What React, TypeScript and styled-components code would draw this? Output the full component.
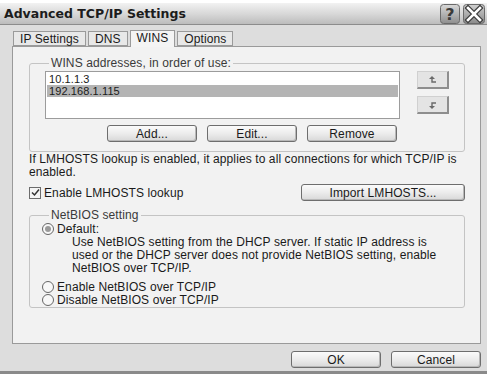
import styled, { createGlobalStyle } from "styled-components";

const Global = createGlobalStyle`
    html, body { margin: 0; padding: 0; background: #ffffff; }
    * { box-sizing: border-box; }
`

const FONT = `"Liberation Sans", Arial, sans-serif`

function HelpIcon() {
    return (
        <svg width="20" height="20" viewBox="0 0 20 20">
            <defs>
                <linearGradient id="hb" x1="0" y1="0" x2="0" y2="1">
                    <stop offset="0" stopColor="#d8d8d8" />
                    <stop offset="1" stopColor="#8e8e8e" />
                </linearGradient>
            </defs>
            <rect x="0.5" y="0.5" width="19" height="19" rx="3" fill="url(#hb)" stroke="#6a6a6a" />
            <text x="10" y="16" textAnchor="middle" fontFamily="DejaVu Sans, sans-serif" fontWeight="bold" fontSize="16" fill="#3a3a3a">?</text>
        </svg>
    )
}

function CloseIcon() {
    return (
        <svg width="22" height="20" viewBox="0 0 22 20">
            <defs>
                <linearGradient id="cb" x1="0" y1="0" x2="0" y2="1">
                    <stop offset="0" stopColor="#d0d0d0" />
                    <stop offset="1" stopColor="#8a8a8a" />
                </linearGradient>
            </defs>
            <rect x="0.5" y="0.5" width="21" height="19" rx="3" fill="url(#cb)" stroke="#6a6a6a" />
            <path d="M5 4 L17 16 M17 4 L5 16" stroke="#3c3c3c" strokeWidth="5" strokeLinecap="square" />
            <path d="M5 4 L17 16 M17 4 L5 16" stroke="#ffffff" strokeWidth="2.6" strokeLinecap="square" />
        </svg>
    )
}

function ArrowIcon({ down }: { down?: boolean }) {
    return (
        <svg width="10" height="10" viewBox="0 0 10 10" style={down ? { transform: "scaleY(-1)" } : undefined}>
            <path d="M4 1 L1 4 L7 4 Z" fill="#6a6a6a" />
            <path d="M4 4 L4 7 L8 7" stroke="#6a6a6a" strokeWidth="1.4" fill="none" />
        </svg>
    )
}

export default function App() {
    return (
        <>
            <Global />
            <Window>
                <TitleBar>
                    <Title>Advanced TCP/IP Settings</Title>
                    <TitleButtons>
                        <HelpIcon />
                        <CloseIcon />
                    </TitleButtons>
                </TitleBar>
                <Body>
                    <TabStrip>
                        <Tab>IP Settings</Tab>
                        <Tab>DNS</Tab>
                        <Tab active>WINS</Tab>
                        <Tab>Options</Tab>
                    </TabStrip>
                    <Panel>
                        <Group height={96}>
                            <Legend>WINS addresses, in order of use:</Legend>
                            <ListRow>
                                <ListBox>
                                    <ListItem>10.1.1.3</ListItem>
                                    <ListItem selected>192.168.1.115</ListItem>
                                </ListBox>
                                <ArrowColumn>
                                    <ArrowButton><ArrowIcon /></ArrowButton>
                                    <ArrowButton><ArrowIcon down /></ArrowButton>
                                </ArrowColumn>
                            </ListRow>
                            <ButtonRow>
                                <Button width={90}>Add...</Button>
                                <Button width={90}>Edit...</Button>
                                <Button width={90}>Remove</Button>
                            </ButtonRow>
                        </Group>
                        <Note>If LMHOSTS lookup is enabled, it applies to all connections for which TCP/IP is enabled.</Note>
                        <CheckRow>
                            <CheckLabel>
                                <CheckBox>
                                    <svg width="9" height="9" viewBox="0 0 9 9">
                                        <path d="M1 4.5 L3.5 7 L8 1.5" stroke="#333" strokeWidth="1.5" fill="none" />
                                    </svg>
                                </CheckBox>
                                Enable LMHOSTS lookup
                            </CheckLabel>
                            <Button width={164}>Import LMHOSTS...</Button>
                        </CheckRow>
                        <Group height={100}>
                            <Legend>NetBIOS setting</Legend>
                            <RadioList>
                                <RadioLine>
                                    <Radio checked />
                                    Default:
                                </RadioLine>
                                <RadioNote>
                                    Use NetBIOS setting from the DHCP server. If static IP address is<br />
                                    used or the DHCP server does not provide NetBIOS setting, enable<br />
                                    NetBIOS over TCP/IP.
                                </RadioNote>
                                <RadioLine spaced>
                                    <Radio />
                                    Enable NetBIOS over TCP/IP
                                </RadioLine>
                                <RadioLine>
                                    <Radio />
                                    Disable NetBIOS over TCP/IP
                                </RadioLine>
                            </RadioList>
                        </Group>
                    </Panel>
                    <Footer>
                        <Button width={90}>OK</Button>
                        <Button width={90}>Cancel</Button>
                    </Footer>
                </Body>
            </Window>
        </>
    )
}

const Window = styled.div`
    width: 487px;
    height: 374px;
    padding-top: 3px;
    display: flex;
    flex-direction: column;
    font-family: ${FONT};
    font-size: 12px;
    letter-spacing: 0.1px;
    color: #1a1a1a;
`
const TitleBar = styled.div`
    height: 22px;
    display: flex;
    align-items: center;
    justify-content: space-between;
    padding: 0 2px 0 4px;
    background: linear-gradient(180deg, #f2f2f2 0%, #d6d6d6 55%, #bcbcbc 100%);
    border-bottom: 1px solid #8c8c8c;
`
const Title = styled.div`
    font-family: "DejaVu Sans", Verdana, sans-serif;
    font-weight: bold;
    font-size: 12.5px;
    letter-spacing: 0;
    color: #1c1c1c;
`
const TitleButtons = styled.div`
    display: flex;
    gap: 3px;
`
const Body = styled.div`
    flex: 1;
    display: flex;
    flex-direction: column;
    padding: 4px 6px 0 12px;
    background: #dddddd;
    border-bottom: 3px solid #8a8a8a;
`
const TabStrip = styled.div`
    display: flex;
    align-items: flex-end;
    gap: 2px;
    height: 17px;
    padding-left: 1px;
`
const Tab = styled.div<{ active?: boolean }>`
    height: ${({ active }) => (active ? 17 : 15)}px;
    padding: 0 6px;
    display: flex;
    align-items: ${({ active }) => (active ? "flex-start" : "center")};
    background: ${({ active }) => (active ? "#f4f4f4" : "#e8e8e8")};
    border: 1px solid #9a9a9a;
    border-bottom: ${({ active }) => (active ? "none" : "1px solid #9a9a9a")};
    margin-bottom: ${({ active }) => (active ? -1 : 0)}px;
    position: relative;
    z-index: ${({ active }) => (active ? 1 : 0)};
    line-height: 14px;
`
const Panel = styled.div`
    height: 298px;
    background: #f2f2f2;
    border: 1px solid #9a9a9a;
    padding: 9px 15px 0 16px;
    display: flex;
    flex-direction: column;
`
const Group = styled.fieldset<{ height: number }>`
    margin: 0;
    flex-shrink: 0;
    height: ${({ height }) => height}px;
    border: 1px solid #c4c4c4;
    border-radius: 3px;
    padding: 0 15px 0 15px;
    min-width: 0;
`
const Legend = styled.legend`
    padding: 0 2px;
    margin-left: 4px;
    color: #3a3a3a;
    font-size: 12px;
`
const ListRow = styled.div`
    display: flex;
    gap: 17px;
    margin-top: 1px;
`
const ListBox = styled.div`
    width: 356px;
    height: 48px;
    background: #ffffff;
    border: 1px solid #9c9c9c;
    padding: 1px 1px;
`
const ListItem = styled.div<{ selected?: boolean }>`
    height: 12px;
    line-height: 12px;
    font-size: 11px;
    padding-left: 2px;
    background: ${({ selected }) => (selected ? "#b4b4b4" : "transparent")};
`
const ArrowColumn = styled.div`
    display: flex;
    flex-direction: column;
    gap: 7px;
`
const ArrowButton = styled.div`
    width: 32px;
    height: 18px;
    display: flex;
    align-items: center;
    justify-content: center;
    background: #e4e4e4;
    border: 1px solid #d0d0d0;
    border-right: 2px solid #8e8e8e;
    border-bottom: 2px solid #8e8e8e;
`
const ButtonRow = styled.div`
    display: flex;
    justify-content: flex-end;
    gap: 10px;
    margin-top: 6px;
    padding-right: 52px;
`
const Button = styled.div<{ width: number }>`
    width: ${({ width }) => width}px;
    height: 17px;
    flex-shrink: 0;
    display: flex;
    align-items: center;
    justify-content: center;
    border: 1px solid #6e6e6e;
    border-radius: 3px;
    background: linear-gradient(180deg, #fbfbfb 0%, #ececec 50%, #d8d8d8 100%);
    box-shadow: inset -1px -1px 0 #b8b8b8;
    color: #1a1a1a;
`
const Note = styled.div`
    margin-top: 1px;
    line-height: 13px;
    padding-right: 4px;
`
const CheckRow = styled.div`
    display: flex;
    align-items: center;
    justify-content: space-between;
    margin-top: 5px;
    margin-bottom: 7px;
    height: 17px;
`
const CheckLabel = styled.div`
    display: flex;
    align-items: center;
    gap: 3px;
`
const CheckBox = styled.div`
    width: 12px;
    height: 12px;
    border: 1px solid #6c6c6c;
    background: #f4f4f4;
    display: flex;
    align-items: center;
    justify-content: center;
`
const RadioList = styled.div`
    display: flex;
    flex-direction: column;
    margin-left: -3px;
`
const RadioLine = styled.div<{ spaced?: boolean }>`
    display: flex;
    align-items: center;
    gap: 3px;
    height: 13px;
    margin-top: ${({ spaced }) => (spaced ? 5 : 0)}px;
    &:first-child { margin-top: 0; }
`
const Radio = styled.span<{ checked?: boolean }>`
    width: 12px;
    height: 12px;
    border-radius: 50%;
    border: 1px solid #666666;
    background: #f8f8f8;
    display: inline-flex;
    align-items: center;
    justify-content: center;
    &::after {
        content: "";
        width: 6px;
        height: 6px;
        border-radius: 50%;
        background: ${({ checked }) => (checked ? "#9a9a9a" : "transparent")};
    }
`
const RadioNote = styled.div`
    padding-left: 30px;
    line-height: 13px;
    margin-top: 1px;
    margin-right: -12px;
    white-space: nowrap;
`
const Footer = styled.div`
    display: flex;
    justify-content: flex-end;
    gap: 10px;
    margin-top: 7px;
`
